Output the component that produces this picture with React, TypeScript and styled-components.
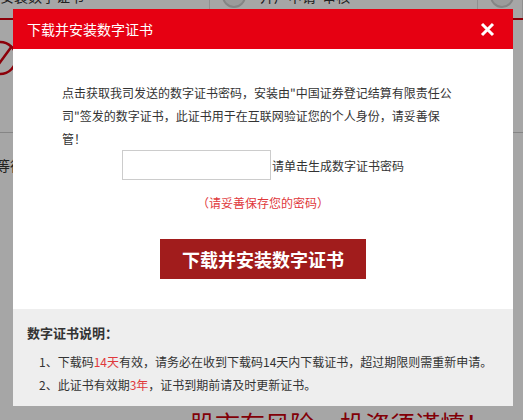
import React from "react";
import styled, { createGlobalStyle } from "styled-components";

const Global = createGlobalStyle`
  html, body { margin: 0; padding: 0; }
  body {
    width: 523px;
    height: 420px;
    overflow: hidden;
    background: #fff;
    font-family: "Microsoft YaHei", "Noto Sans CJK SC", "Noto Sans", sans-serif;
  }
`;

/* ---------- background page (dimmed by overlay) ---------- */
const Page = styled.div`
  width: 523px;
  height: 420px;
  display: flex;
  flex-direction: column;
  overflow: hidden;
  background: #fff;
`;

const TopBar = styled.div`
  margin-top: -26px;
  height: 46px;
  display: flex;
  align-items: center;
  border-bottom: 2px solid #d7000f;
  box-sizing: border-box;
`;

const TopItem = styled.div<{ $w: number }>`
  width: ${(p) => p.$w}px;
  height: 100%;
  display: flex;
  align-items: center;
  gap: 14px;
  padding-left: 12px;
  box-sizing: border-box;
  border-right: 1px solid #ddd;
  font-size: 14px;
  color: #333;
  &:first-child { padding-left: 0; }
`;

const TopCircle = styled.span`
  width: 24px;
  height: 24px;
  border-radius: 50%;
  border: 2px solid #ccc;
  background: #eee;
  box-sizing: border-box;
`;

const StepRow = styled.div`
  height: 113px;
  display: flex;
  align-items: flex-start;
  padding-top: 20px;
  box-sizing: border-box;
  border-bottom: 1px solid #ccc;
`;

const StepIcon = styled.svg`
  margin-left: -18px;
  width: 36px;
  height: 36px;
`;

const WaitText = styled.div`
  margin-top: 22px;
  margin-left: -4px;
  font-size: 14px;
  color: #333;
`;

const Slogan = styled.div`
  margin-top: auto;
  margin-bottom: -18px;
  padding-left: 190px;
  font-size: 25px;
  line-height: 30px;
  color: #c8000c;
  white-space: nowrap;
`;

/* ---------- overlay + modal ---------- */
const Overlay = styled.div`
  position: fixed;
  inset: 0;
  background: rgba(0, 0, 0, 0.35);
`;

const Modal = styled.div`
  position: fixed;
  left: 13px;
  top: 9px;
  width: 500px;
  background: #fff;
  display: flex;
  flex-direction: column;
`;

const Header = styled.div`
  height: 40px;
  background: #e60012;
  display: flex;
  align-items: center;
  justify-content: space-between;
  padding: 0 18px 0 14px;
`;

const Title = styled.div`
  color: #fff;
  font-size: 14px;
`;

const Close = styled.button`
  width: 16px;
  height: 16px;
  padding: 0;
  border: 0;
  background: transparent;
  display: flex;
  align-items: center;
  justify-content: center;
  cursor: pointer;
`;

const Body = styled.div`
  padding: 32px 0 30px;
  display: flex;
  flex-direction: column;
  align-items: center;
`;

const Intro = styled.p`
  margin: 0;
  width: 396px;
  align-self: flex-start;
  margin-left: 49px;
  font-size: 12px;
  line-height: 23px;
  color: #333;
`;

const InputRow = styled.div`
  display: flex;
  align-items: center;
  height: 30px;
`;

const CodeInput = styled.input`
  width: 149px;
  height: 30px;
  box-sizing: border-box;
  border: 1px solid #ccc;
  padding: 0 6px;
  font-size: 12px;
  outline: none;
`;

const InputLabel = styled.span`
  margin-left: 1px;
  font-size: 12px;
  color: #333;
`;

const Note = styled.div`
  margin-top: 13px;
  font-size: 12px;
  line-height: 20px;
  color: #e0383b;
`;

const InstallButton = styled.button`
  margin-top: 26px;
  width: 206px;
  height: 40px;
  border: 0;
  background: #a11c1c;
  color: #fff;
  font-family: inherit;
  font-size: 18px;
  font-weight: bold;
  cursor: pointer;
`;

const Footer = styled.div`
  background: #eeeeee;
  padding: 11.5px 14px 10.5px;
`;

const FooterTitle = styled.div`
  font-size: 13px;
  font-weight: bold;
  line-height: 23px;
  color: #333;
`;

const List = styled.ol`
  list-style: none;
  margin: 6px 0 0;
  padding: 0 0 0 12px;
`;

const Item = styled.li`
  font-size: 12px;
  line-height: 23px;
  color: #333;
  white-space: nowrap;
`;

const Hl = styled.span`
  color: #e0383b;
`;

export default function App() {
  return (
    <>
      <Global />
      <Page>
        <TopBar>
          <TopItem $w={210}>安装数字证书</TopItem>
          <TopItem $w={268}>
            <TopCircle />
            开户申请&nbsp;&nbsp;审核
          </TopItem>
          <TopItem $w={45}>
            <TopCircle />
          </TopItem>
        </TopBar>
        <StepRow>
          <StepIcon viewBox="0 0 36 36">
            <circle cx="18" cy="18" r="16" fill="none" stroke="#d7000f" strokeWidth="2.5" />
            <path d="M10 18 L16 25 L30 6" fill="none" stroke="#d7000f" strokeWidth="2.5" />
          </StepIcon>
        </StepRow>
        <WaitText>等待</WaitText>
        <Slogan>股市有风险，投资须谨慎！</Slogan>
      </Page>
      <Overlay />
      <Modal>
        <Header>
          <Title>下载并安装数字证书</Title>
          <Close aria-label="关闭">
            <svg width="15" height="15" viewBox="0 0 15 15">
              <path d="M2 2 L13 13 M13 2 L2 13" stroke="#fff" strokeWidth="3" strokeLinecap="butt" />
            </svg>
          </Close>
        </Header>
        <Body>
          <Intro>
            点击获取我司发送的数字证书密码，安装由"中国证券登记结算有限责任公司"签发的数字证书，此证书用于在互联网验证您的个人身份，请妥善保管！
          </Intro>
          <InputRow>
            <CodeInput type="text" />
            <InputLabel>请单击生成数字证书密码</InputLabel>
          </InputRow>
          <Note>（请妥善保存您的密码）</Note>
          <InstallButton>下载并安装数字证书</InstallButton>
        </Body>
        <Footer>
          <FooterTitle>数字证书说明：</FooterTitle>
          <List>
            <Item>
              1、下载码<Hl>14天</Hl>有效，请务必在收到下载码14天内下载证书，超过期限则需重新申请。
            </Item>
            <Item>
              2、此证书有效期<Hl>3年</Hl>，证书到期前请及时更新证书。
            </Item>
          </List>
        </Footer>
      </Modal>
    </>
  );
}
